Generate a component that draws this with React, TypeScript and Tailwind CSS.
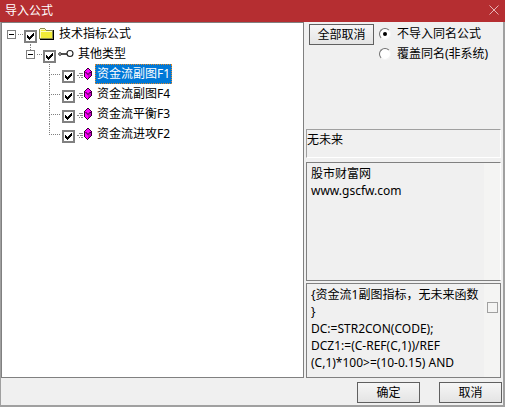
import { useState } from "react"

type Level = "root" | "group" | "leaf"

const formulas = ["资金流副图F1", "资金流副图F4", "资金流平衡F3", "资金流进攻F2"]

const source = `{资金流1副图指标，无未来函数
}
DC:=STR2CON(CODE);
DCZ1:=(C-REF(C,1))/REF
(C,1)*100>=(10-0.15) AND`

function FolderIcon() {
  return (
    <svg width="16" height="16" viewBox="0 0 16 16" shapeRendering="crispEdges">
      <path d="M1 2h5v1h1v1h7v9H0V3h1z" fill="#8c8c50" />
      <path d="M1 3h5v1h1v1h6v7H1z" fill="#f2ec38" />
      <path d="M1 3.5h5M1 5.5h12M1.5 4v8" stroke="#fdfcc0" fill="none" />
      <path d="M14 4h1v10H1v-1h13z" fill="#000" />
    </svg>
  )
}

function KeyIcon() {
  return (
    <svg width="16" height="16" viewBox="0 0 16 16" fill="none" stroke="#222">
      <path d="M3 8h6" strokeWidth="1.6" />
      <circle cx="2" cy="8" r="1.3" fill="#fff" />
      <circle cx="12" cy="7.5" r="3" strokeWidth="1.1" />
    </svg>
  )
}

function GemIcon() {
  return (
    <svg width="16" height="16" viewBox="0 0 16 16" shapeRendering="crispEdges">
      <path d="M2 7h4M0 9h2M3 9h3M2 11h1M4 11h2" transform="translate(0 .5)" stroke="#888" />
      <path d="M10 2h2v1h1v1h1v1h1v5h-1v1h-1v1h-1v1h-1v1h-1v-1h-1v-1h-1v-1h-1V5h1V4h1V3h1z" fill="#3a0038" />
      <path d="M10 3h2v1h1v1h1v1h-1v1h-1v1h-2V7H9V6H8V5h1V4h1z" fill="#f0f" />
      <path d="M8 6h1v1h1v1h1v5h-1v-1H9v-1H8z" fill="#f0f" />
      <path d="M13 7h1v3h-1v1h-1v1h-1V9h1V8h1z" fill="#c400c4" />
      <path d="M8 7h1v1h1v1h1V8h1V7h1" fill="none" stroke="#8a0088" transform="translate(0 -.5)" />
    </svg>
  )
}

function Guide({ level, last }: { level: Level; last?: boolean }) {
  if (level === "leaf") {
    return (
      <div className="flex flex-col w-[17px] h-5 pl-1 pr-0.5">
        <div className="h-[11px] border-l border-b border-dotted border-[#808080]" />
        {!last && <div className="flex-1 border-l border-dotted border-[#808080]" />}
      </div>
    )
  }
  return (
    <div className="flex flex-col w-[17px] h-5">
      <div className={level === "group" ? "h-1.5 ml-1 border-l border-dotted border-[#808080]" : "h-1.5"} />
      <div className="flex items-center gap-0.5">
        <button aria-label="折叠" className="grid place-items-center size-[9px] border border-[#808080] bg-white">
          <span className="w-[5px] h-px bg-black" />
        </button>
        <span className="w-[5px] border-t border-dotted border-[#808080]" />
      </div>
    </div>
  )
}

function TreeRow({ level, label, last, selected }: { level: Level; label: string; last?: boolean; selected?: boolean }) {
  const [checked, setChecked] = useState(true)

  return (
    <div className="flex h-5">
      <Guide level={level} last={last} />
      <label className="flex h-5">
        <span className="relative self-end mb-px size-[13px]">
          <input
            type="checkbox"
            checked={checked}
            onChange={(e) => setChecked(e.target.checked)}
            className="block appearance-none size-[13px] border-2 border-[#808080] bg-white"
          />
          {checked && (
            <svg
              className="absolute inset-0 pointer-events-none"
              width="13"
              height="13"
              viewBox="0 0 13 13"
              shapeRendering="crispEdges"
            >
              <path d="M3 5h1v1h1v1h1V6h1V5h1V4h1V3h1v3H9v1H8v1H7v1H6v1H5V9H4V8H3z" fill="#000" />
            </svg>
          )}
        </span>
        <span className="flex items-center w-4 mx-0.5">
          {level === "root" ? <FolderIcon /> : level === "group" ? <KeyIcon /> : <GemIcon />}
        </span>
        <span
          className={
            selected
              ? "px-px leading-[18px] border border-dotted border-[#e08a2a] bg-[#0078d7] text-white whitespace-nowrap"
              : "px-0.5 leading-5 whitespace-nowrap"
          }
        >
          {label}
        </span>
      </label>
    </div>
  )
}

function Radio({ label, checked, onChange }: { label: string; checked: boolean; onChange: () => void }) {
  return (
    <label className="flex items-center gap-1.5 h-5 whitespace-nowrap">
      <input
        type="radio"
        name="duplicate"
        checked={checked}
        onChange={onChange}
        className="grid place-items-center appearance-none size-3 rounded-full border border-t-[#707070] border-l-[#707070] border-b-[#f4f4f4] border-r-[#f4f4f4] bg-white checked:before:block checked:before:size-1 checked:before:rounded-full checked:before:bg-black"
      />
      {label}
    </label>
  )
}

const buttonStyle = "h-[21px] border border-[#606060] bg-gradient-to-b from-[#f6f6f6] to-[#e4e4e4] leading-4"

export default function App() {
  const [mode, setMode] = useState("skip")

  return (
    <div className="flex flex-col min-h-screen bg-[#f0f0f0] border-l border-r-2 border-b-2 border-[#a0a0a0] text-xs text-black font-['Noto_Sans','Noto_Sans_CJK_SC',sans-serif]">
      <header className="flex items-center justify-between h-[22px] -ml-px -mr-0.5 pl-[5px] pr-1.5 bg-[#b52e31] text-white">
        <h1>导入公式</h1>
        <button aria-label="关闭" className="pb-0.5">
          <svg width="10" height="10" viewBox="0 0 10 10" stroke="#e6b4b5">
            <path d="M.5.5l9 9M9.5.5l-9 9" />
          </svg>
        </button>
      </header>

      <main className="flex flex-1 gap-0.5">
        <section className="flex-1 min-w-0 pt-px pl-[5px] border border-[#808080] bg-white">
          <TreeRow level="root" label="技术指标公式" />
          <div className="pl-[19px]">
            <TreeRow level="group" label="其他类型" />
            <div className="pl-[19px]">
              {formulas.map((name, i) => (
                <TreeRow key={name} level="leaf" label={name} selected={i === 0} last={i === formulas.length - 1} />
              ))}
            </div>
          </div>
        </section>

        <section className="flex flex-col w-[197px] shrink-0 pr-0.5">
          <div className="flex flex-1 items-start gap-[5px] pt-0.5 pl-[3px]">
            <button className={`${buttonStyle} w-[65px]`}>全部取消</button>
            <div className="flex flex-col">
              <Radio label="不导入同名公式" checked={mode === "skip"} onChange={() => setMode("skip")} />
              <Radio label="覆盖同名(非系统)" checked={mode === "cover"} onChange={() => setMode("cover")} />
            </div>
          </div>
          <div className="h-[29px] mb-1 border border-t-[#a0a0a0] border-l-[#a0a0a0] border-b-white border-r-white leading-5">
            无未来
          </div>
          <div className="flex h-[119px] mb-0.5 border border-[#808080] border-r-white">
            <textarea
              aria-label="说明"
              readOnly
              value={"股市财富网\nwww.gscfw.com"}
              className="flex-1 min-w-0 resize-none overflow-hidden outline-none pl-1 pt-0.5 leading-[17px]"
            />
            <div className="w-4 bg-[#f4f4f3]" />
          </div>
          <div className="flex h-[95px] border border-[#808080]">
            <textarea
              aria-label="公式源码"
              readOnly
              value={source}
              className="flex-1 min-w-0 resize-none overflow-hidden outline-none pl-1 pt-0.5 leading-[17px] whitespace-pre"
            />
            <div className="flex justify-center w-4 pt-[18px] bg-[#f4f4f3]">
              <span className="size-[11px] border border-[#a0a0a0]" />
            </div>
          </div>
        </section>
      </main>

      <footer className="flex justify-end gap-[19px] pt-1 pb-0.5 pr-px">
        <button className={`${buttonStyle} w-[63px]`}>确定</button>
        <button className={`${buttonStyle} w-[63px]`}>取消</button>
      </footer>
    </div>
  )
}
